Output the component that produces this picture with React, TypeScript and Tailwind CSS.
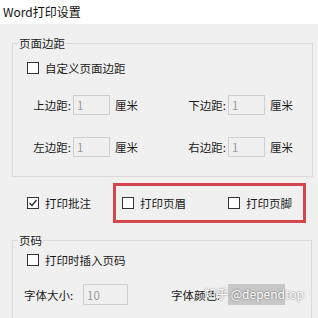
function CheckBox({ checked = false }: { checked?: boolean }) {
  return (
    <span className="w-[12px] h-[12px] border border-[#333333] bg-white flex items-center justify-center shrink-0">
      {checked && (
        <svg width="10" height="10" viewBox="0 0 10 10">
          <polyline points="1.5,5 4,7.5 8.5,2" fill="none" stroke="#222222" strokeWidth="1.2" />
        </svg>
      )}
    </span>
  );
}

function Field({ value, className = '' }: { value?: string; className?: string }) {
  return (
    <div
      className={`h-[20px] border border-[#cfcfcf] flex items-center pl-[3px] text-[#9a9a9a] ${className}`}
    >
      {value}
    </div>
  );
}

function MarginRow({ a, b }: { a: string; b: string }) {
  return (
    <div className="flex items-center">
      <span className="w-[58px] text-right">{a}</span>
      <Field value="1" className="ml-[2px] w-[37px]" />
      <span className="ml-[5px] w-[24px]">厘米</span>
      <span className="w-[87px] text-right">{b}</span>
      <Field value="1" className="ml-[2px] w-[37px]" />
      <span className="ml-[5px]">厘米</span>
    </div>
  );
}

export default function App() {
  return (
    <div className="relative w-[318px] h-[318px] overflow-hidden bg-[#f0f0f0] text-[11.5px] leading-[16px] text-[#1a1a1a] font-['Noto_Sans_CJK_SC',sans-serif]">
      <div className="h-[24px] bg-white flex items-center pl-[3px] text-[12px] text-[#111]">
        Word打印设置
      </div>

      <fieldset className="mt-[11px] ml-[12px] mr-[5px] border border-[#dadada] pb-[19px]">
        <legend className="ml-[5px] px-[1px] leading-[16px]">页面边距</legend>
        <div className="mt-[7px] h-[20px] flex items-center gap-[6px] pl-[14px]">
          <CheckBox />
          <span>自定义页面边距</span>
        </div>
        <div className="mt-[17px] flex flex-col gap-[22px]">
          <MarginRow a="上边距:" b="下边距:" />
          <MarginRow a="左边距:" b="右边距:" />
        </div>
      </fieldset>

      <div className="mt-[6px] flex items-center">
        <div className="w-[113px] flex items-center gap-[6px] pl-[27px]">
          <CheckBox checked />
          <span>打印批注</span>
        </div>
        <div className="w-[193px] h-[40px] border-[3px] border-[#d2474c] flex items-center pl-[6px]">
          <div className="w-[106px] flex items-center gap-[6px]">
            <CheckBox />
            <span>打印页眉</span>
          </div>
          <div className="flex items-center gap-[6px]">
            <CheckBox />
            <span>打印页脚</span>
          </div>
        </div>
      </div>

      <fieldset className="mt-[9px] ml-[12px] mr-[6px] border border-[#dadada] pb-[30px]">
        <legend className="ml-[5px] px-[1px] leading-[16px]">页码</legend>
        <div className="mt-[2px] h-[20px] flex items-center gap-[6px] pl-[14px]">
          <CheckBox />
          <span>打印时插入页码</span>
        </div>
        <div className="mt-[14px] flex items-center pl-[11px]">
          <span className="w-[54px]">字体大小:</span>
          <Field value="10" className="ml-[5px] w-[45px] h-[21px]" />
          <span className="ml-[43px] w-[57px]">字体颜色:</span>
          <div className="w-[57px] h-[21px] bg-[#c8c8c8]" />
        </div>
      </fieldset>

      <div className="absolute left-[204px] top-[285px] whitespace-nowrap text-[12px] leading-[18px] text-white [text-shadow:0_0_2px_rgba(0,0,0,0.6)]">
        知乎 @dependtop
      </div>
    </div>
  );
}
